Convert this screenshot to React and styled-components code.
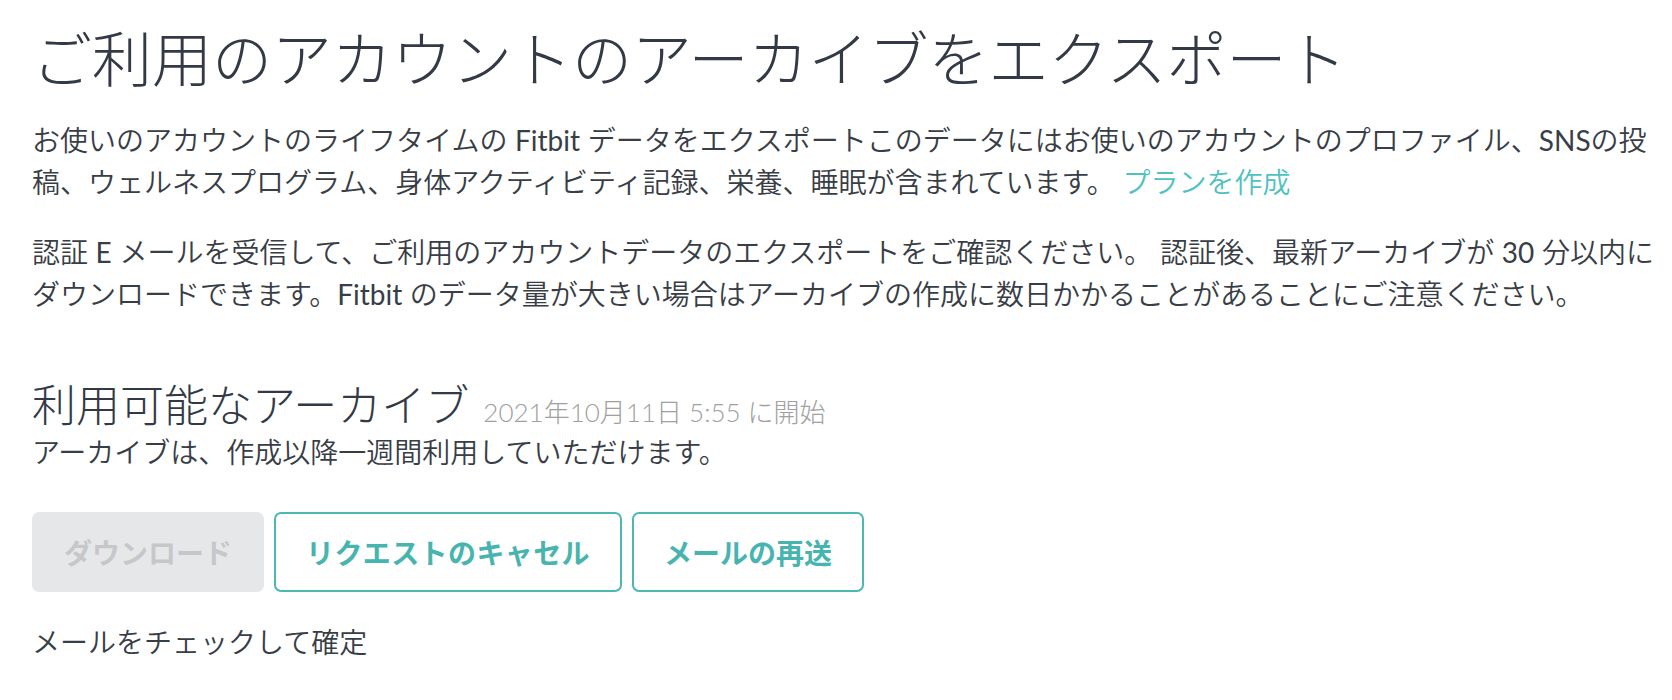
import React from 'react';
import styled, { createGlobalStyle } from 'styled-components';

const GlobalStyle = createGlobalStyle`
  html, body {
    margin: 0;
    padding: 0;
    background: #ffffff;
  }
  body {
    font-family: Lato, "Noto Sans CJK JP", "Noto Sans", sans-serif;
    color: #383d46;
  }
`;

const Page = styled.div`
  padding: 23px 0 40px 32px;
  width: 1622px;
`;

const Title = styled.h1`
  margin: 0;
  font-size: 60px;
  line-height: 72px;
  font-weight: 300;
  color: #333a46;
`;

const Paragraph = styled.p`
  margin: ${(p) => p.$top || 0}px 0 0;
  font-size: 28px;
  line-height: 42px;
  font-weight: 350;
  color: #383d46;
`;

// Lato has no 350 weight, so latin runs keep the regular cut
const Latin = styled.span`
  font-weight: 400;
`;

const Link = styled.a`
  color: #4fc2bf;
  text-decoration: none;
`;

const HeadingRow = styled.div`
  display: flex;
  align-items: baseline;
  gap: 14px;
  margin-top: 64px;
`;

const Heading = styled.h2`
  margin: 0;
  font-size: 44px;
  line-height: 52px;
  font-weight: 300;
  color: #333a46;
`;

const Started = styled.span`
  font-size: 26px;
  font-weight: 300;
  color: #a0a0a0;
`;

const Buttons = styled.div`
  display: flex;
  gap: 10px;
  margin-top: 39px;
`;

const Button = styled.button`
  height: 80px;
  padding: 0 30px;
  box-sizing: border-box;
  border-radius: 7px;
  font-family: inherit;
  font-size: 28px;
  font-weight: 700;
  letter-spacing: ${(p) => p.$spacing || 0}px;
  border: 2px solid ${(p) => (p.disabled ? '#e6e7e9' : '#4bb8b3')};
  background: ${(p) => (p.disabled ? '#e6e7e9' : '#ffffff')};
  color: ${(p) => (p.disabled ? '#c6c7c9' : '#47b4af')};
  cursor: ${(p) => (p.disabled ? 'default' : 'pointer')};
`;

export default function App() {
  return (
    <Page>
      <GlobalStyle />
      <Title>ご利用のアカウントのアーカイブをエクスポート</Title>
      <Paragraph $top={24}>
        お使いのアカウントのライフタイムの <Latin>Fitbit</Latin> データをエクスポートこのデータにはお使いのアカウントのプロファイル、<Latin>SNS</Latin>の投稿、ウェルネスプログラム、身体アクティビティ記録、栄養、睡眠が含まれています。{' '}
        <Link href="#">プランを作成</Link>
      </Paragraph>
      <Paragraph $top={28}>
        認証 <Latin>E</Latin> メールを受信して、ご利用のアカウントデータのエクスポートをご確認ください。 認証後、最新アーカイブが <Latin>30</Latin> 分以内にダウンロードできます。<Latin>Fitbit</Latin> のデータ量が大きい場合はアーカイブの作成に数日かかることがあることにご注意ください。
      </Paragraph>
      <HeadingRow>
        <Heading>利用可能なアーカイブ</Heading>
        <Started>2021年10月11日 5:55 に開始</Started>
      </HeadingRow>
      <Paragraph $top={0}>アーカイブは、作成以降一週間利用していただけます。</Paragraph>
      <Buttons>
        <Button disabled>ダウンロード</Button>
        <Button $spacing={0.4}>リクエストのキャセル</Button>
        <Button>メールの再送</Button>
      </Buttons>
      <Paragraph $top={29}>メールをチェックして確定</Paragraph>
    </Page>
  );
}
